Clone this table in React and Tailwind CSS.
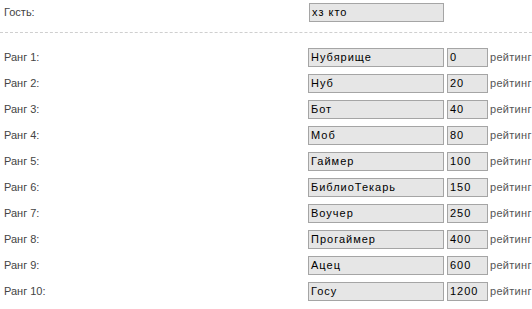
import React from 'react';

// ranks table: name + minimal rating
const ranks = [
  ['Нубярище', '0'],
  ['Нуб', '20'],
  ['Бот', '40'],
  ['Моб', '80'],
  ['Гаймер', '100'],
  ['БиблиоТекарь', '150'],
  ['Воучер', '250'],
  ['Прогаймер', '400'],
  ['Ацец', '600'],
  ['Госу', '1200'],
];

const font = { fontFamily: 'Tahoma, "Liberation Sans", Arial, sans-serif' };

function Field({ value, className }) {
  return (
    <div
      className={`shrink-0 h-[19px] leading-[17px] border border-[#a5a5a5] bg-[#e6e6e6] px-[2px] text-[11px] tracking-[1px] text-black whitespace-nowrap overflow-hidden ${className}`}
      style={font}
    >
      {value}
    </div>
  );
}

export default function App() {
  return (
    <div className="w-[532px] h-[309px] overflow-hidden bg-white text-[11px] text-[#444]" style={font}>
      <div className="flex items-center h-[19px] mt-[3px]">
        <div className="shrink-0 w-[309px] pl-[4px]">Гость:</div>
        <Field value="хз кто" className="w-[135px]" />
      </div>

      <div className="mt-[10px] border-t border-dashed border-[#cfcfcf]" />

      <div className="mt-[9px] flex flex-col">
        {ranks.map(([name, points], i) => (
          <div key={i} className="flex items-center h-[26px] shrink-0 pt-[4px]">
            <div className="shrink-0 w-[308px] pl-[4px]">Ранг {i + 1}:</div>
            <Field value={name} className="w-[136px]" />
            <Field value={points} className="w-[41px] ml-[3px]" />
            <span className="shrink-0 ml-[2px] whitespace-nowrap tracking-[0.3px] text-[#555]">рейтинг</span>
          </div>
        ))}
      </div>
    </div>
  );
}
